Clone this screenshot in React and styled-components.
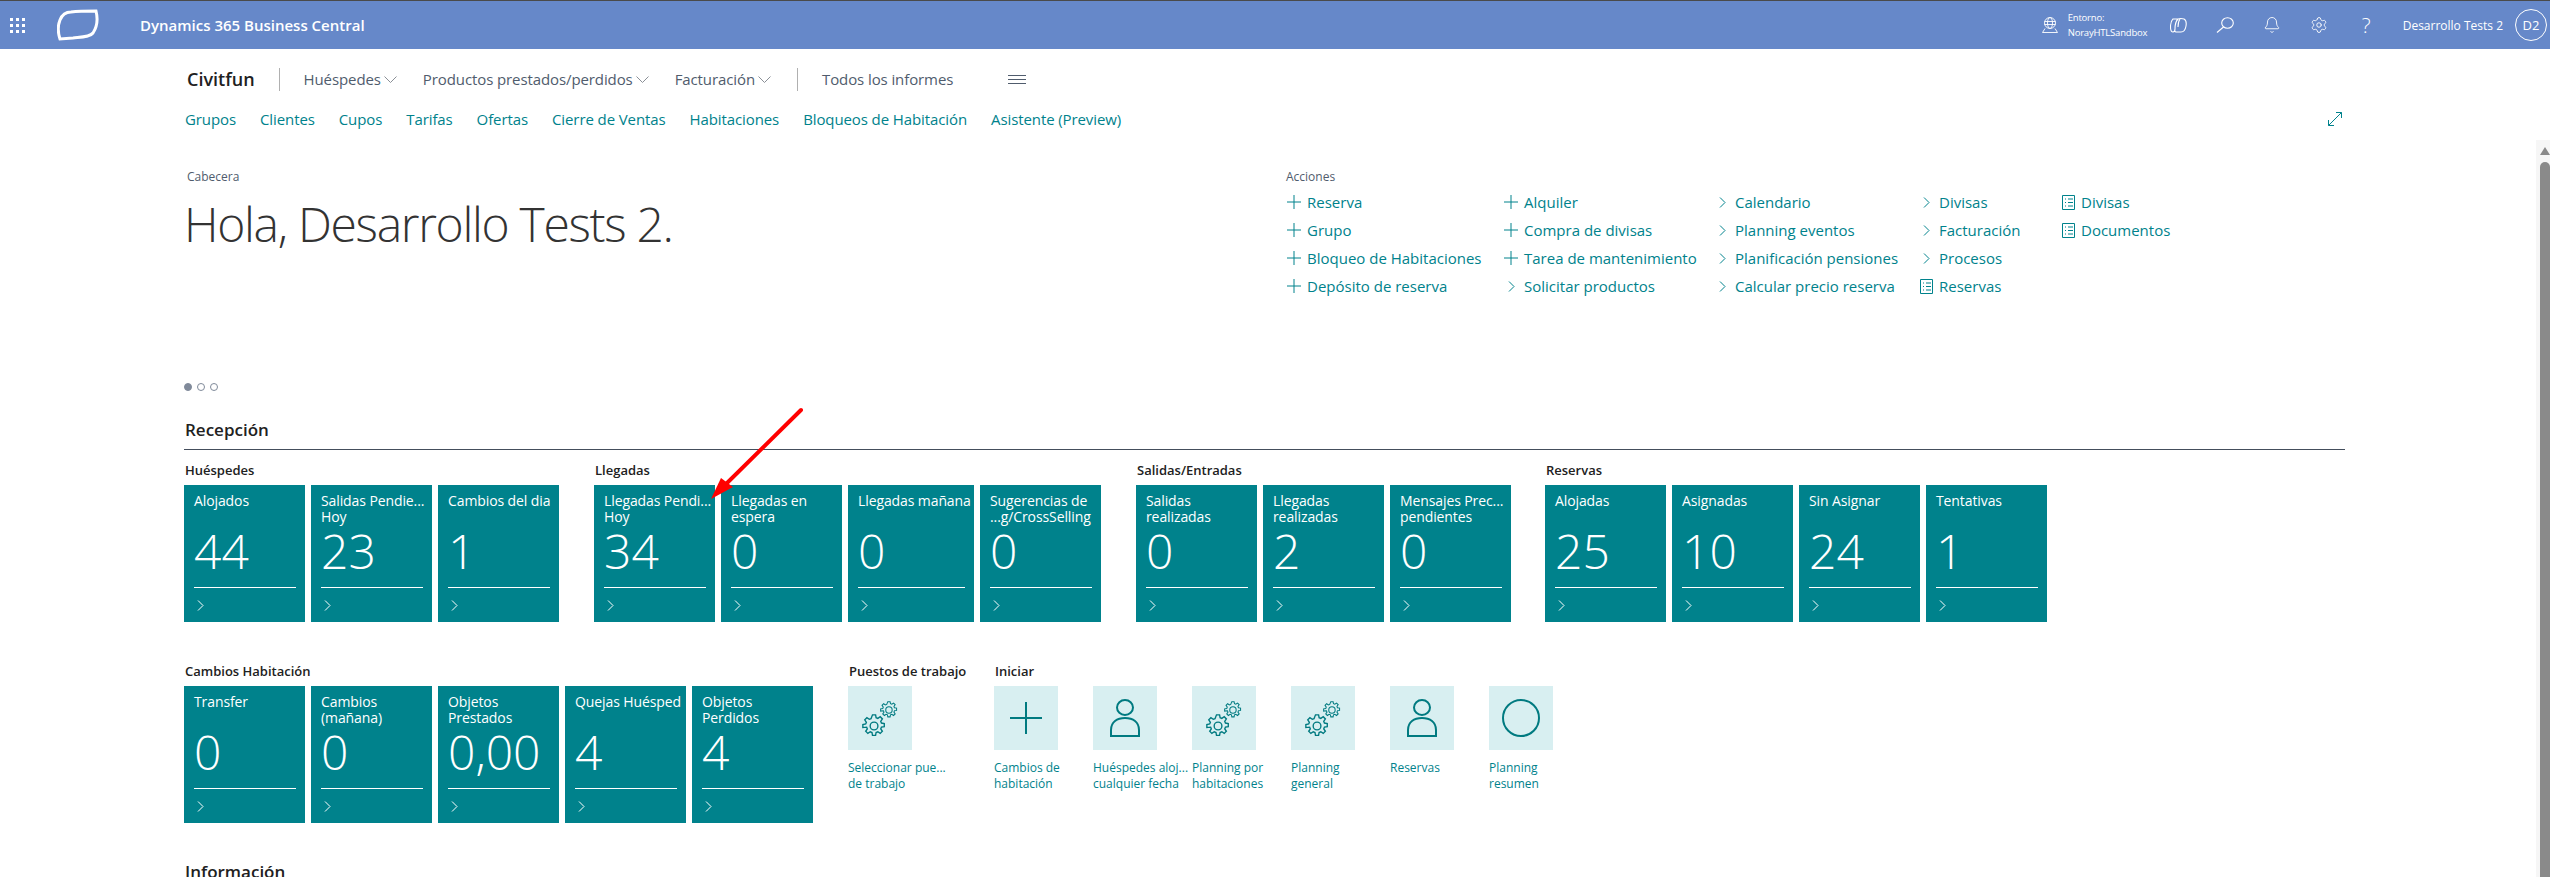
import React from 'react'
import styled, { createGlobalStyle } from 'styled-components'
import { Bell, Settings } from 'lucide-react'

const GlobalStyle = createGlobalStyle`
  html, body {
    margin: 0;
    height: 877px;
    overflow: hidden;
    background: #fff;
    font-family: "Open Sans", "Noto Sans", sans-serif;
  }
`

const TEAL = '#00828c'

const Plus = ({ size = 14, weight = 1 }) => (
  <svg width={size} height={size} viewBox="0 0 14 14" fill="none" stroke={TEAL} strokeWidth={weight}>
    <path d="M7 0v14M0 7h14" />
  </svg>
)

const Chevron = ({ color = TEAL, w = 7, h = 11 }) => (
  <svg width={w} height={h} viewBox="0 0 7 11" fill="none" stroke={color} strokeWidth="1">
    <path d="M1 .5l5 5-5 5" />
  </svg>
)

const DownChevron = () => (
  <svg width="13" height="7" viewBox="0 0 13 7" fill="none" stroke="#8a8f96" strokeWidth="1">
    <path d="M.5.5l6 6 6-6" />
  </svg>
)

const DocIcon = () => (
  <svg width="13" height="15" viewBox="0 0 13 15" fill="none" stroke={TEAL} strokeWidth="1">
    <path d="M.5.5h12v14H.5zM3 4h1M6 4h5M3 7.500h1M6 7.500h5M3 11h1M6 11h5" />
  </svg>
)

const gearPath =
  'M12.2 1h3.600l.6 3.300 2 .8 2.800-1.900 2.500 2.500-1.900 2.800.8 2 3.300.6v3.600l-3.300.6-.8 2 1.900 2.800-2.500 2.500-2.800-1.900-2 .8-.6 3.300h-3.600l-.6-3.300-2-.8-2.800 1.900-2.500-2.500 1.900-2.800-.8-2L1 15.800v-3.600l3.300-.6.8-2L3.200 6.800l2.500-2.500 2.800 1.900 2-.8z'

const GearsIcon = () => (
  <svg width="36" height="38" viewBox="0 0 36 38" fill="none" stroke="#007a80" strokeWidth="1.600">
    <g transform="translate(0 15) scale(.86)">
      <path d={gearPath} />
      <circle cx="14" cy="14" r="4.500" />
    </g>
    <g transform="translate(18 2) scale(.64)">
      <path d={gearPath} />
      <circle cx="14" cy="14" r="5" />
    </g>
  </svg>
)

const PersonIcon = () => (
  <svg width="32" height="38" viewBox="0 0 32 38" fill="none" stroke="#007a80" strokeWidth="2">
    <ellipse cx="16" cy="8.500" rx="8" ry="7.500" />
    <path d="M2 37v-6c0-8 6-12 14-12s14 4 14 12v6z" />
  </svg>
)

const BigPlus = () => (
  <svg width="32" height="32" viewBox="0 0 32 32" fill="none" stroke="#007a80" strokeWidth="2">
    <path d="M16 0v32M0 16h32" />
  </svg>
)

const RingIcon = () => (
  <svg width="38" height="38" viewBox="0 0 38 38" fill="none" stroke="#007a80" strokeWidth="2">
    <circle cx="19" cy="19" r="18" />
  </svg>
)

const rows = {
  groups1: [
    { label: 'Huéspedes', tiles: [
      { t: ['Alojados'], v: '44' },
      { t: ['Salidas Pendie...', 'Hoy'], v: '23' },
      { t: ['Cambios del dia'], v: '1' },
    ] },
    { label: 'Llegadas', tiles: [
      { t: ['Llegadas Pendi...', 'Hoy'], v: '34' },
      { t: ['Llegadas en', 'espera'], v: '0' },
      { t: ['Llegadas mañana'], v: '0', w: 126 },
      { t: ['Sugerencias de', '...g/CrossSelling'], v: '0' },
    ] },
    { label: 'Salidas/Entradas', tiles: [
      { t: ['Salidas', 'realizadas'], v: '0' },
      { t: ['Llegadas', 'realizadas'], v: '2' },
      { t: ['Mensajes Prec...', 'pendientes'], v: '0' },
    ] },
    { label: 'Reservas', pull: true, tiles: [
      { t: ['Alojadas'], v: '25' },
      { t: ['Asignadas'], v: '10' },
      { t: ['Sin Asignar'], v: '24' },
      { t: ['Tentativas'], v: '1' },
    ] },
  ],
  cambios: [
    { t: ['Transfer'], v: '0' },
    { t: ['Cambios', '(mañana)'], v: '0' },
    { t: ['Objetos', 'Prestados'], v: '0,00' },
    { t: ['Quejas Huésped'], v: '4' },
    { t: ['Objetos', 'Perdidos'], v: '4' },
  ],
}

const iniciar = [
  { icon: <BigPlus />, t: ['Cambios de', 'habitación'] },
  { icon: <PersonIcon />, t: ['Huéspedes aloj...', 'cualquier fecha'] },
  { icon: <GearsIcon />, t: ['Planning por', 'habitaciones'] },
  { icon: <GearsIcon />, t: ['Planning', 'general'] },
  { icon: <PersonIcon />, t: ['Reservas'] },
  { icon: <RingIcon />, t: ['Planning', 'resumen'] },
]

const actionCols = [
  { w: 217, items: [['plus', 'Reserva'], ['plus', 'Grupo'], ['plus', 'Bloqueo de Habitaciones'], ['plus', 'Depósito de reserva']] },
  { w: 211, items: [['plus', 'Alquiler'], ['plus', 'Compra de divisas'], ['plus', 'Tarea de mantenimiento'], ['chev', 'Solicitar productos']] },
  { w: 204, items: [['chev', 'Calendario'], ['chev', 'Planning eventos'], ['chev', 'Planificación pensiones'], ['chev', 'Calcular precio reserva']] },
  { w: 142, items: [['chev', 'Divisas'], ['chev', 'Facturación'], ['chev', 'Procesos'], ['doc', 'Reservas']] },
  { w: 140, items: [['doc', 'Divisas'], ['doc', 'Documentos']] },
]

const Tile = ({ tile }) => (
  <TileBox $w={tile.w}>
    <TileTitle>
      {tile.t.map((line) => <div key={line}>{line}</div>)}
    </TileTitle>
    <TileValue>{tile.v}</TileValue>
    <TileFoot>
      <Chevron color="#fff" />
    </TileFoot>
  </TileBox>
)

const ActionIcon = ({ kind }) => {
  if (kind === 'plus') return <Plus />
  if (kind === 'doc') return <DocIcon />
  return <Chevron />
}

export default function App() {
  return (
    <Page>
      <GlobalStyle />
      <TopBar>
        <Waffle>
          {Array.from({ length: 9 }).map((_, i) => <i key={i} />)}
        </Waffle>
        <Logo viewBox="0 0 42 32" width="42" height="32" fill="none" stroke="#fff" strokeWidth="3">
          <path d="M14 3C22 2 32 2 39 2c2 8 1 16-3 22-3 4-11 4-20 5L3 30C1 24 1 16 3 11 5 6 9 3 14 3z" />
        </Logo>
        <Brand>Dynamics 365 Business Central</Brand>
        <TopRight>
          <EnvIcon viewBox="0 0 16 16" width="16" height="16" fill="none" stroke="#fff" strokeWidth=".9">
            <circle cx="8" cy="6" r="5.500" />
            <ellipse cx="8" cy="6" rx="2.500" ry="5.500" />
            <path d="M2.500 4.500h11M2.500 7.500h11M3 11.500L.5 15.500h15L13 11.500" />
          </EnvIcon>
          <EnvText>
            <div>Entorno:</div>
            <div>NorayHTLSandbox</div>
          </EnvText>
          <IconSlot>
            <svg viewBox="0 0 17 15" width="17" height="15" fill="none" stroke="#fff" strokeWidth="1.100">
              <path d="M3 1h5c-2 2-3 6-3 10 0 2-1 3-2 3-1.500 0-2.500-2-2.500-5S1 3 3 1zM8 1c1.500-.5 4-.5 6 0 2 1 2.500 4 2 7-.5 3-2 6-5 6H6c-1 0-1.500-1-1-3 0-4 1-8 3-10z" />
              <path d="M10 1c-1.500 2-2 5-2 8" />
            </svg>
          </IconSlot>
          <IconSlot>
            <svg viewBox="0 0 18 16" width="18" height="16" fill="none" stroke="#fff" strokeWidth="1.100">
              <ellipse cx="11.500" cy="6" rx="5.800" ry="5.300" />
              <path d="M7.500 10L1 15.500" />
            </svg>
          </IconSlot>
          <IconSlot><Bell size={18} strokeWidth={1.2} color="#fff" /></IconSlot>
          <IconSlot><Settings size={18} strokeWidth={1.2} color="#fff" /></IconSlot>
          <Help>?</Help>
          <UserName>Desarrollo Tests 2</UserName>
          <Avatar>D2</Avatar>
        </TopRight>
      </TopBar>

      <Content>
        <MenuRow>
          <AppName>Civitfun</AppName>
          <Divider />
          <MenuItem>Huéspedes<DownChevron /></MenuItem>
          <MenuItem>Productos prestados/perdidos<DownChevron /></MenuItem>
          <MenuItem>Facturación<DownChevron /></MenuItem>
          <Divider />
          <MenuItem>Todos los informes</MenuItem>
          <Burger><i /><i /><i /></Burger>
        </MenuRow>

        <LinkRow>
          <LinkList>
            {['Grupos', 'Clientes', 'Cupos', 'Tarifas', 'Ofertas', 'Cierre de Ventas', 'Habitaciones', 'Bloqueos de Habitación', 'Asistente (Preview)'].map((l) => (
              <NavLink key={l}>{l}</NavLink>
            ))}
          </LinkList>
          <svg width="14" height="14" viewBox="0 0 14 14" fill="none" stroke={TEAL} strokeWidth="1">
            <path d="M.5 13.500L13.500.5M8 .5h5.500V6M.5 8v5.500H6" />
          </svg>
        </LinkRow>

        <Hero>
          <HeroLeft>
            <Caption>Cabecera</Caption>
            <Greeting>Hola, Desarrollo Tests 2.</Greeting>
          </HeroLeft>
          <div>
            <Caption>Acciones</Caption>
            <ActionGrid>
              {actionCols.map((col, c) => (
                <ActionCol key={c} $w={col.w}>
                  {col.items.map(([kind, label]) => (
                    <ActionItem key={label}>
                      <ActionIconBox $kind={kind}><ActionIcon kind={kind} /></ActionIconBox>
                      {label}
                    </ActionItem>
                  ))}
                </ActionCol>
              ))}
            </ActionGrid>
          </div>
        </Hero>

        <Dots><Dot $on /><Dot /><Dot /></Dots>

        <SectionTitle>Recepción</SectionTitle>
        <GroupRow>
          {rows.groups1.map((g) => (
            <Group key={g.label} $pull={g.pull}>
              <GroupLabel>{g.label}</GroupLabel>
              <TileRow>
                {g.tiles.map((t) => <Tile key={t.t.join()} tile={t} />)}
              </TileRow>
            </Group>
          ))}
        </GroupRow>

        <SecondRow>
          <Group>
            <GroupLabel>Cambios Habitación</GroupLabel>
            <TileRow>
              {rows.cambios.map((t) => <Tile key={t.t.join()} tile={t} />)}
            </TileRow>
          </Group>
          <Group $w={111}>
            <GroupLabel>Puestos de trabajo</GroupLabel>
            <Shortcut>
              <ShortcutBox><GearsIcon /></ShortcutBox>
              <ShortcutText><div>Seleccionar pue...</div><div>de trabajo</div></ShortcutText>
            </Shortcut>
          </Group>
          <Group>
            <GroupLabel>Iniciar</GroupLabel>
            <ShortcutRow>
              {iniciar.map((s) => (
                <Shortcut key={s.t.join()}>
                  <ShortcutBox>{s.icon}</ShortcutBox>
                  <ShortcutText>{s.t.map((l) => <div key={l}>{l}</div>)}</ShortcutText>
                </Shortcut>
              ))}
            </ShortcutRow>
          </Group>
        </SecondRow>

        <InfoTitle>Información</InfoTitle>
      </Content>

      <RedArrow viewBox="0 0 100 100" width="100" height="100">
        <path d="M92 5L16 80" stroke="#f00" strokeWidth="4" strokeLinecap="round" />
        <path d="M2 94L12 73 24 82z" fill="#f00" />
      </RedArrow>

      <ScrollTrack>
        <ScrollArrow />
        <ScrollThumb />
      </ScrollTrack>
    </Page>
  )
}

const Page = styled.div`
  position: relative;
  width: 2550px;
  height: 877px;
  overflow: hidden;
  color: #212121;
`
const TopBar = styled.header`
  display: flex;
  align-items: center;
  height: 48px;
  border-top: 1px solid #4a4a4a;
  background: #6688c9;
  color: #fff;
`
const Waffle = styled.div`
  display: grid;
  grid-template-columns: repeat(3, 3px);
  gap: 3px;
  margin-left: 10px;
  i {
    width: 3px;
    height: 3px;
    background: #fff;
  }
`
const Logo = styled.svg`
  margin-left: 32px;
`
const Brand = styled.div`
  margin-left: 41px;
  font-size: 15px;
  font-weight: 600;
`
const TopRight = styled.div`
  display: flex;
  align-items: center;
  margin-left: auto;
  margin-right: 3px;
`
const EnvIcon = styled.svg`
  margin-right: 10px;
`
const EnvText = styled.div`
  width: 87px;
  font-size: 9.500px;
  letter-spacing: -0.2px;
  line-height: 15px;
`
const IconSlot = styled.div`
  display: flex;
  justify-content: center;
  width: 47px;
`
const Help = styled.div`
  width: 47px;
  text-align: center;
  font-size: 21px;
  font-weight: 300;
`
const UserName = styled.div`
  margin-left: 13px;
  font-size: 12px;
  white-space: nowrap;
`
const Avatar = styled.div`
  display: flex;
  align-items: center;
  justify-content: center;
  width: 30px;
  height: 30px;
  margin-left: 12px;
  border: 1px solid #fff;
  border-radius: 50%;
  font-size: 13px;
`
const Content = styled.main`
  padding: 0 205px 0 184px;
`
const MenuRow = styled.nav`
  display: flex;
  align-items: center;
  height: 24px;
  margin-top: 18px;
`
const AppName = styled.div`
  margin: 0 24px 0 3px;
  font-size: 18px;
  font-weight: 600;
`
const Divider = styled.div`
  width: 1px;
  height: 23px;
  margin-right: 24px;
  background: #b0b0b0;
`
const MenuItem = styled.div`
  display: flex;
  align-items: center;
  gap: 3px;
  margin-right: 26px;
  font-size: 15px;
  letter-spacing: -0.1px;
  color: #505c6d;
`
const Burger = styled.div`
  display: grid;
  gap: 3px;
  width: 18px;
  margin-left: 29px;
  i {
    height: 1px;
    background: #505c6d;
  }
`
const LinkRow = styled.div`
  display: flex;
  align-items: center;
  justify-content: space-between;
  height: 24px;
  margin-top: 16px;
  padding: 0 3px 0 1px;
`
const LinkList = styled.div`
  display: flex;
  gap: 24px;
`
const NavLink = styled.a`
  font-size: 15px;
  letter-spacing: -0.1px;
  color: ${TEAL};
`
const Hero = styled.section`
  display: flex;
  height: 215px;
  margin-top: 37px;
`
const HeroLeft = styled.div`
  width: 1102px;
  padding-left: 3px;
  box-sizing: border-box;
`
const Caption = styled.div`
  height: 18px;
  font-size: 12px;
  line-height: 18px;
  color: #505c6d;
`
const Greeting = styled.h1`
  margin: 6px 0 0 -3px;
  font-size: 48px;
  font-weight: 300;
  letter-spacing: -1.300px;
  line-height: 64px;
  color: #333;
`
const ActionGrid = styled.div`
  display: flex;
  margin-top: 2px;
`
const ActionCol = styled.div`
  width: ${(p) => p.$w}px;
`
const ActionItem = styled.div`
  display: flex;
  align-items: center;
  height: 28px;
  font-size: 15px;
  color: ${TEAL};
  white-space: nowrap;
`
const iconInset = { plus: 1, doc: 2, chev: 5 }
const ActionIconBox = styled.span`
  display: flex;
  box-sizing: border-box;
  width: 21px;
  padding-left: ${(p) => iconInset[p.$kind]}px;
`
const Dots = styled.div`
  display: flex;
  gap: 5px;
  padding-left: 0;
`
const Dot = styled.span`
  box-sizing: border-box;
  width: 8px;
  height: 8px;
  border: 1px solid #808a9a;
  border-radius: 50%;
  background: ${(p) => (p.$on ? '#808a9a' : 'transparent')};
`
const SectionTitle = styled.h2`
  margin: 27px 0 0;
  padding: 0 0 7px 1px;
  border-bottom: 1px solid #444e5c;
  font-size: 17px;
  font-weight: 600;
  line-height: 24px;
`
const InfoTitle = styled.h2`
  margin: 37px 0 0 1px;
  font-size: 17px;
  font-weight: 600;
  line-height: 24px;
`
const GroupRow = styled.div`
  display: flex;
  gap: 35px;
  margin-top: 10px;
`
const SecondRow = styled(GroupRow)`
  margin-top: 39px;
`
const Group = styled.div`
  ${(p) => p.$w && `width: ${p.$w}px;`}
  ${(p) => p.$pull && 'margin-left: -1px;'}
`
const GroupLabel = styled.div`
  height: 20px;
  margin-bottom: 5px;
  padding-left: 1px;
  font-size: 13px;
  font-weight: 600;
  line-height: 20px;
  white-space: nowrap;
`
const TileRow = styled.div`
  display: flex;
  gap: 6px;
`
const TileBox = styled.div`
  display: flex;
  flex-direction: column;
  box-sizing: border-box;
  width: ${(p) => p.$w || 121}px;
  height: 137px;
  padding: 8px 9px 0 10px;
  background: ${TEAL};
  color: #fff;
`
const TileTitle = styled.div`
  height: 32px;
  font-size: 14px;
  letter-spacing: -0.1px;
  line-height: 16px;
  white-space: nowrap;
`
const TileValue = styled.div`
  height: 62px;
  font-size: 48px;
  font-weight: 300;
  line-height: 52px;
`
const TileFoot = styled.div`
  display: flex;
  align-items: center;
  height: 34px;
  padding-left: 3px;
  border-top: 1px solid #fff;
`
const ShortcutRow = styled.div`
  display: flex;
  gap: 10px;
`
const Shortcut = styled.div`
  width: 89px;
`
const ShortcutBox = styled.div`
  display: flex;
  align-items: center;
  justify-content: center;
  width: 64px;
  height: 64px;
  background: #d8eff1;
`
const ShortcutText = styled.div`
  margin-top: 10px;
  font-size: 12px;
  line-height: 16px;
  color: ${TEAL};
  white-space: nowrap;
`
const RedArrow = styled.svg`
  position: absolute;
  left: 709px;
  top: 405px;
`
const ScrollTrack = styled.div`
  position: absolute;
  left: 2536px;
  top: 140px;
  bottom: 0;
  width: 14px;
  background: #f6f6f6;
`
const ScrollArrow = styled.div`
  position: absolute;
  left: 4px;
  top: 7px;
  width: 0;
  height: 0;
  border-left: 5px solid transparent;
  border-right: 5px solid transparent;
  border-bottom: 8px solid #8a8a8a;
`
const ScrollThumb = styled.div`
  position: absolute;
  left: 4px;
  top: 22px;
  bottom: 0;
  width: 10px;
  border-radius: 5px 5px 0 0;
  background: #8a8a8a;
`
